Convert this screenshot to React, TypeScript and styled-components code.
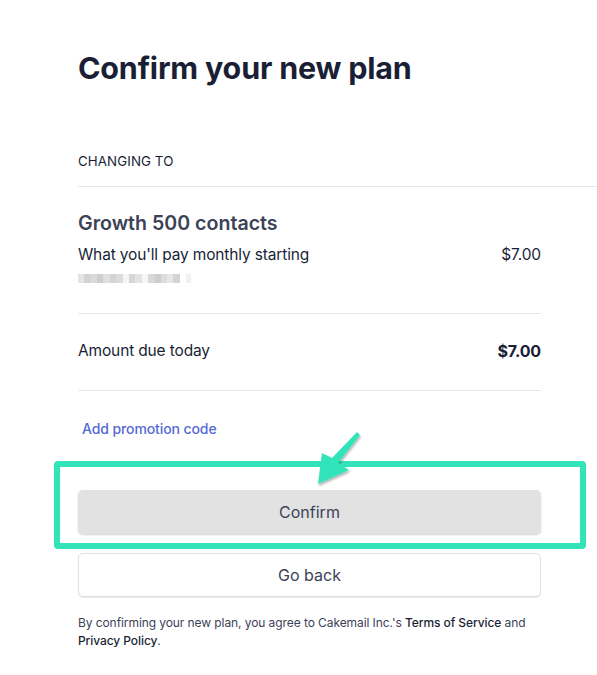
import React from "react";
import styled, { createGlobalStyle } from "styled-components";

const GlobalStyle = createGlobalStyle`
  html, body {
    margin: 0;
    padding: 0;
    background: #fff;
  }
  body {
    font-family: Inter, "Noto Sans", "Liberation Sans", sans-serif;
    color: #1a1f36;
    -webkit-font-smoothing: antialiased;
  }
`;

const Page = styled.div`
  width: 597px;
  height: 675px;
  overflow: hidden;
  padding: 50px 0 0 78px;
  box-sizing: border-box;
`;

const Column = styled.div`
  width: 463px;
  display: flex;
  flex-direction: column;
`;

const Title = styled.h1`
  margin: 0;
  font-size: 30.5px;
  line-height: 36px;
  font-weight: 700;
  color: #1a1f36;
  letter-spacing: -0.2px;
`;

const SectionLabel = styled.div`
  margin-top: 65px;
  width: 519px;
  padding-bottom: 15px;
  border-bottom: 1px solid #e3e8ee;
  font-size: 13.3px;
  line-height: 20px;
  color: #1a1f36;
  letter-spacing: 0.1px;
`;

const PlanBlock = styled.div`
  padding: 23px 0 30px;
  border-bottom: 1px solid #e3e8ee;
`;

const PlanName = styled.div`
  font-size: 19.6px;
  line-height: 26px;
  font-weight: 600;
  color: #3c4257;
  margin-bottom: 8px;
`;

const Row = styled.div`
  display: flex;
  justify-content: space-between;
  align-items: flex-start;
  font-size: 15.5px;
  line-height: 22px;
  letter-spacing: -0.15px;
  color: #1a1f36;
`;

const Amount = styled.span<{ bold?: boolean }>`
  font-weight: ${(p) => (p.bold ? 700 : 400)};
  font-size: ${(p) => (p.bold ? "16px" : "15.5px")};
  color: #1a1f36;
`;

const Blurred = styled.div`
  display: flex;
  margin-top: 8px;
  height: 9px;
`;

const Pixel = styled.span<{ shade: string; w: number }>`
  display: block;
  width: ${(p) => p.w}px;
  height: 9px;
  background: ${(p) => p.shade};
`;

const DueRow = styled(Row)`
  padding: 26px 0 28px;
  border-bottom: 1px solid #e3e8ee;
`;

const PromoLink = styled.a`
  margin: 28px 0 0 4px;
  font-size: 14px;
  line-height: 20px;
  color: #5469d4;
  font-weight: 500;
  letter-spacing: -0.1px;
  text-decoration: none;
  cursor: pointer;
`;

const Actions = styled.div`
  position: relative;
  margin-top: 51px;
  display: flex;
  flex-direction: column;
  gap: 19px;
`;

const Button = styled.button<{ primary?: boolean }>`
  height: 44px;
  width: 100%;
  border-radius: 5px;
  font-family: inherit;
  font-size: 16px;
  color: #3c4257;
  cursor: pointer;
  border: ${(p) => (p.primary ? "none" : "1px solid #dcdfe4")};
  background: ${(p) => (p.primary ? "#e2e2e2" : "#ffffff")};
  box-shadow: ${(p) =>
    p.primary
      ? "0 1px 2px rgba(0, 0, 0, 0.18)"
      : "0 1px 1px rgba(0, 0, 0, 0.08)"};
`;

const Highlight = styled.div`
  position: absolute;
  left: -24px;
  top: -29px;
  width: 532px;
  height: 88px;
  box-sizing: border-box;
  border: 6px solid #33e4b9;
  border-radius: 4px;
  pointer-events: none;
`;

const Arrow = styled.svg`
  position: absolute;
  left: 236px;
  top: -62px;
  overflow: visible;
  pointer-events: none;
`;

const Legal = styled.p`
  margin: 17px 0 0;
  font-size: 12px;
  line-height: 18px;
  letter-spacing: -0.08px;
  color: #3c4257;
  strong {
    font-weight: 500;
    color: #1a1f36;
  }
`;

const pixels: [string, number][] = [
  ["#e4e4e4", 6],
  ["#d2d2d2", 6],
  ["#dadada", 7],
  ["#cfcfcf", 6],
  ["#e0e0e0", 7],
  ["#d4d4d4", 6],
  ["#dcdcdc", 7],
  ["#f4f4f4", 6],
  ["#d6d6d6", 6],
  ["#e2e2e2", 7],
  ["#f6f6f6", 6],
  ["#d8d8d8", 7],
  ["#cdcdcd", 6],
  ["#dddddd", 6],
  ["#e6e6e6", 6],
  ["#d3d3d3", 7],
  ["#ffffff", 6],
  ["#f1f1f1", 5],
];

export default function App() {
  return (
    <>
      <GlobalStyle />
      <Page>
        <Column>
          <Title>Confirm your new plan</Title>
          <SectionLabel>CHANGING TO</SectionLabel>
          <PlanBlock>
            <PlanName>Growth 500 contacts</PlanName>
            <Row>
              <span>What you'll pay monthly starting</span>
              <Amount>$7.00</Amount>
            </Row>
            <Blurred>
              {pixels.map(([shade, w], i) => (
                <Pixel key={i} shade={shade} w={w} />
              ))}
            </Blurred>
          </PlanBlock>
          <DueRow>
            <span>Amount due today</span>
            <Amount bold>$7.00</Amount>
          </DueRow>
          <PromoLink>Add promotion code</PromoLink>
          <Actions>
            <Button primary>Confirm</Button>
            <Button>Go back</Button>
            <Highlight />
            <Arrow width="50" height="60" viewBox="0 0 50 60">
              <defs>
                <filter id="arrowShadow" x="-30%" y="-30%" width="160%" height="160%">
                  <feDropShadow dx="1" dy="2" stdDeviation="1.2" floodColor="#000" floodOpacity="0.3" />
                </filter>
              </defs>
              <path
                d="M43 4 L46 7 L24 35 L35 42 L4 56 L8 25 L18 30 Z"
                fill="#33e4b9"
                filter="url(#arrowShadow)"
              />
            </Arrow>
          </Actions>
          <Legal>
            By confirming your new plan, you agree to Cakemail Inc.'s{" "}
            <strong>Terms of Service</strong> and <strong>Privacy Policy</strong>.
          </Legal>
        </Column>
      </Page>
    </>
  );
}
